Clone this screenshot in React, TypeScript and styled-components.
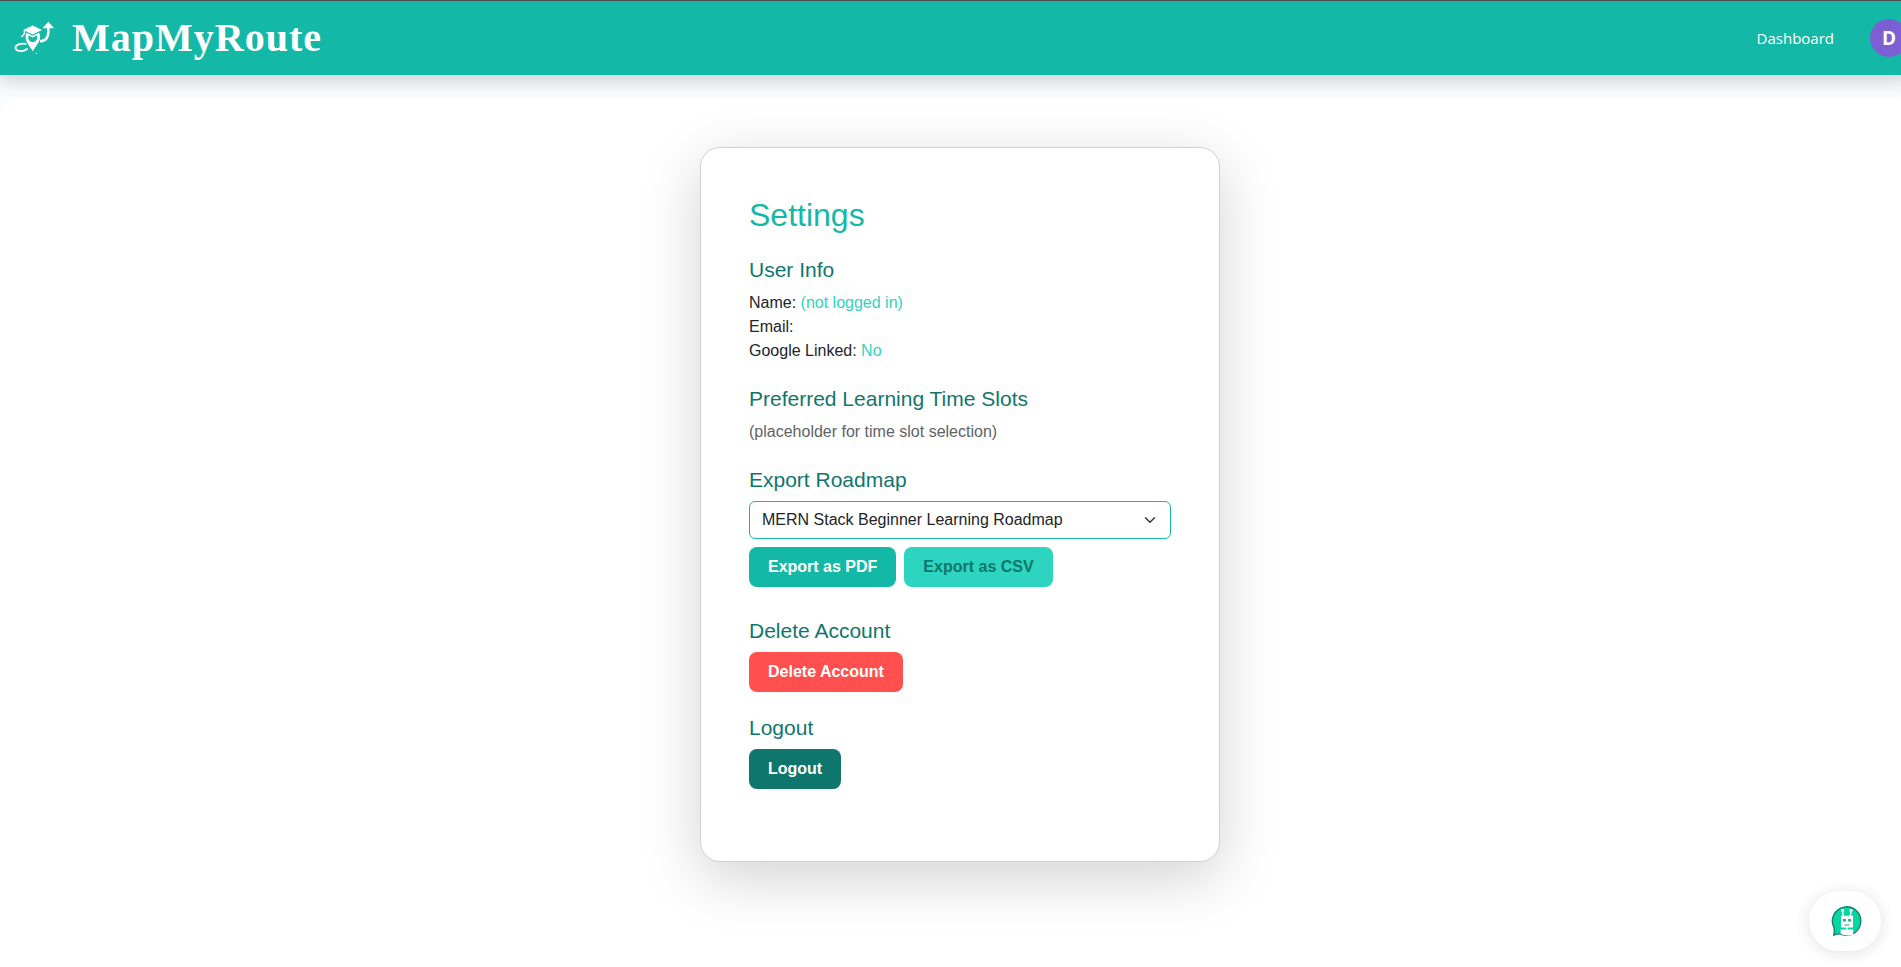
import React from 'react';
import styled, { createGlobalStyle } from 'styled-components';

const GlobalStyle = createGlobalStyle`
  *, *::before, *::after { box-sizing: border-box; }
  body {
    margin: 0;
    background: #fafcff;
    color: #212529;
    font: 16px/24px "Liberation Sans", Arial, sans-serif;
    overflow-x: hidden;
  }
  h1, h2, p { margin: 0; }
`;

const Page = styled.div`
  min-height: 100vh;
  display: flex;
  flex-direction: column;
  overflow-x: hidden;
`;

const NavBar = styled.header`
  flex: none;
  display: flex;
  align-items: center;
  justify-content: space-between;
  height: 75px;
  margin-right: -7px;
  padding-left: 12px;
  border-top: 1px solid #4d4d4d;
  background: #14b8a6;
  box-shadow: 0 8px 16px rgba(0, 0, 0, 0.15);
`;

const Brand = styled.a`
  display: flex;
  align-items: center;
  gap: 16px;
  color: #fff;
  font: bold 40px/48px "Liberation Serif", "Times New Roman", serif;
  letter-spacing: 1px;
  text-decoration: none;
`;

const Nav = styled.nav`
  display: flex;
  align-items: center;
  gap: 36px;
`;

const NavLink = styled.a`
  color: #fff;
  font: 15px/24px "Open Sans", "Segoe UI", sans-serif;
  text-decoration: none;
`;

const Avatar = styled.button`
  width: 38px;
  height: 38px;
  padding: 0;
  border: 0;
  border-radius: 50%;
  background: #7c5fd3;
  color: #fff;
  font: bold 19px/38px "Open Sans", "Segoe UI", sans-serif;
`;

const Content = styled.main`
  flex: 1;
  display: flex;
  justify-content: center;
  align-items: flex-start;
  margin: 24px -19px 0 0;
  padding: 48px 16px;
  border-radius: 20px 20px 0 0;
  background: #fff;
`;

const Card = styled.section`
  width: 520px;
  max-width: 100%;
  padding: 48px;
  border: 1px solid #d0d0d0;
  border-radius: 20px;
  background: #fff;
  box-shadow: 0 16px 60px rgba(0, 0, 0, 0.18);
`;

const Title = styled.h1`
  margin-bottom: 24px;
  color: #14b8a6;
  font-size: 32px;
  font-weight: 400;
  line-height: 38px;
`;

const Group = styled.section<{ $space?: number }>`
  margin-bottom: ${({ $space = 24 }) => $space}px;
`;

const GroupTitle = styled.h2`
  display: block;
  margin-bottom: 9px;
  color: #0f766e;
  font-size: 21px;
  font-weight: 400;
  line-height: 24px;
`;

const Value = styled.span`
  color: #2dd4bf;
`;

const Hint = styled.p`
  color: #5e6368;
`;

const SelectWrap = styled.div`
  display: grid;
  align-items: center;
  margin-bottom: 8px;

  > * { grid-area: 1 / 1; }
  > svg { justify-self: end; margin-right: 13px; pointer-events: none; }
`;

const Select = styled.select`
  width: 100%;
  height: 38px;
  padding: 0 36px 0 12px;
  appearance: none;
  border: 1px solid #14b8a6;
  border-radius: 6px;
  background: #fff;
  color: #212529;
  font: inherit;
`;

const Actions = styled.div`
  display: flex;
  gap: 8px;
`;

const Button = styled.button<{ $bg: string; $fg?: string }>`
  display: block;
  height: 40px;
  padding: 0 19px;
  border: 0;
  border-radius: 8px;
  background: ${({ $bg }) => $bg};
  color: ${({ $fg = '#fff' }) => $fg};
  font: inherit;
  font-weight: 700;
`;

const ChatButton = styled.button`
  position: fixed;
  right: 20px;
  bottom: 16px;
  display: flex;
  align-items: center;
  justify-content: center;
  width: 72px;
  height: 60px;
  padding: 0 0 0 4px;
  border: 0;
  border-radius: 30px;
  background: #fff;
  box-shadow: 0 2px 16px rgba(0, 0, 0, 0.12);
`;

const RouteLogo = () => (
  <svg width="44" height="44" viewBox="0 0 44 44" fill="none" aria-hidden="true">
    <path d="M20.700 9.600 11 14l9.700 4.600 9.300-4.600Z" fill="#fff" />
    <path d="M12.400 15v2.800L9.400 21" stroke="#fff" strokeWidth="1.500" />
    <path
      fillRule="evenodd"
      d="M14.400 16.800 20.700 19.800l6.300-3c1 1.600 1.400 3.400 1 5.600-.7 4-3.800 7.200-7.300 12.800-3.500-5.600-6.400-8.800-7-12.600-.3-2.200-.1-4.200.7-5.800Zm2.200 2.800c-1 3.600.8 6.600 4.100 6.600s5.200-3 4.200-6.600l-4.200 2Z"
      fill="#fff"
    />
    <path d="M13.600 27.800C8.800 27 3 28.800 3.500 32.200c.6 3.600 8 4 11.500.8" stroke="#fff" strokeWidth="1.800" strokeLinecap="round" />
    <path d="M28.200 25.400c5.400-.8 8.100-3.800 8.100-9V11" stroke="#fff" strokeWidth="2.600" />
    <path d="m36.300 5.800-5.800 6.400h11.600Z" fill="#fff" />
    <path d="M23.200 37.400h2.400" stroke="#fff" strokeOpacity="0.5" />
  </svg>
);

const Chevron = () => (
  <svg width="16" height="12" viewBox="0 0 16 16" aria-hidden="true">
    <path d="m2 5 6 6 6-6" fill="none" stroke="#343a40" strokeWidth="2" strokeLinecap="round" strokeLinejoin="round" />
  </svg>
);

const RobotIcon = () => (
  <svg width="32" height="32" viewBox="0 0 32 32" aria-hidden="true">
    <path
      d="M2.800 30.200c.6-2.800.7-5 .2-7.600A14.200 14.200 0 1 1 9.800 29c-2.400-.6-4.600.2-7 1.200Z"
      fill="#06d6a0"
      stroke="#13806c"
      strokeWidth="1.400"
    />
    <path d="M12.200 11.200 11.600 6M19.400 11.200 20 6" stroke="#fff" strokeWidth="1.400" />
    <circle cx="11.600" cy="5.200" r="1.500" fill="#fff" />
    <circle cx="20" cy="5.200" r="1.500" fill="#fff" />
    <path d="M10 10.800h12v11.800H10ZM15.200 22.600h1.400v2h-1.400ZM9.600 24.600h12.600V29.400c-4 1.400-8.600 1.400-12.600-.6Z" fill="#fff" />
    <path d="M12 14h2.800v2.400H12ZM17.200 14H20v2.400h-2.800ZM13.200 19.400h5.200v1.200h-5.200Z" fill="#0bae86" />
  </svg>
);

export default function App() {
  return (
    <>
      <GlobalStyle />
      <Page>
        <NavBar>
          <Brand href="#home">
            <RouteLogo />
            MapMyRoute
          </Brand>
          <Nav>
            <NavLink href="#dashboard">Dashboard</NavLink>
            <Avatar type="button">D</Avatar>
          </Nav>
        </NavBar>
        <Content>
          <Card>
            <Title>Settings</Title>
            <Group>
              <GroupTitle>User Info</GroupTitle>
              <p>Name: <Value>(not logged in)</Value></p>
              <p>Email:</p>
              <p>Google Linked: <Value>No</Value></p>
            </Group>
            <Group>
              <GroupTitle>Preferred Learning Time Slots</GroupTitle>
              <Hint>(placeholder for time slot selection)</Hint>
            </Group>
            <Group $space={32}>
              <GroupTitle as="label" htmlFor="roadmap">Export Roadmap</GroupTitle>
              <SelectWrap>
                <Select id="roadmap">
                  <option>MERN Stack Beginner Learning Roadmap</option>
                </Select>
                <Chevron />
              </SelectWrap>
              <Actions>
                <Button type="button" $bg="#14b8a6">Export as PDF</Button>
                <Button type="button" $bg="#2dd4bf" $fg="#0f766e">Export as CSV</Button>
              </Actions>
            </Group>
            <Group>
              <GroupTitle>Delete Account</GroupTitle>
              <Button type="button" $bg="#ff4f4f">Delete Account</Button>
            </Group>
            <Group>
              <GroupTitle>Logout</GroupTitle>
              <Button type="button" $bg="#0f766e">Logout</Button>
            </Group>
          </Card>
        </Content>
      </Page>
      <ChatButton type="button" aria-label="Open chat assistant">
        <RobotIcon />
      </ChatButton>
    </>
  );
}
